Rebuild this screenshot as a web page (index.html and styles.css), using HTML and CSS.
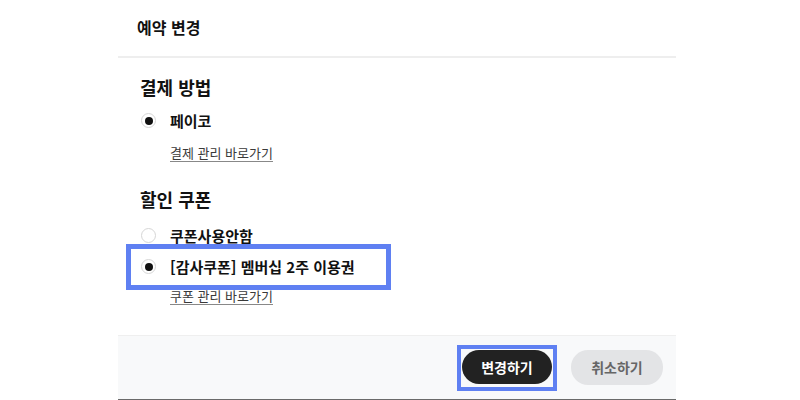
FILE: index.html
```html
<!DOCTYPE html>
<html lang="ko">
<head>
<meta charset="utf-8">
<link rel="stylesheet" href="styles.css">
</head>
<body>
<div class="modal">
  <div class="modal-header"><h1 class="title">예약 변경</h1></div>
  <div class="modal-body">
    <section class="section">
      <h2 class="section-title">결제 방법</h2>
      <div class="option"><span class="radio checked"></span><span class="label">페이코</span></div>
      <a class="manage-link">결제 관리 바로가기</a>
    </section>
    <section class="section coupons">
      <h2 class="section-title">할인 쿠폰</h2>
      <div class="option"><span class="radio"></span><span class="label">쿠폰사용안함</span></div>
      <div class="option highlighted"><span class="radio checked"></span><span class="label">[감사쿠폰] 멤버십 2주 이용권</span><span class="focus-ring"></span></div>
      <a class="manage-link tight">쿠폰 관리 바로가기</a>
    </section>
  </div>
  <div class="modal-footer">
    <button class="btn btn-primary">변경하기<span class="focus-ring btn-ring"></span></button>
    <button class="btn btn-cancel">취소하기</button>
  </div>
</div>
</body>
</html>
```
FILE: styles.css
```css
* { box-sizing: border-box; }
html, body { margin: 0; padding: 0; background: #fff; }
body {
  font-family: "Noto Sans CJK KR", "Noto Sans", sans-serif;
  color: #111;
}
.modal {
  width: 558px;
  margin-left: 118px;
  height: 400px;
  display: flex;
  flex-direction: column;
}
.modal-header {
  height: 58px;
  padding: 0 0 0 19px;
  border-bottom: 2px solid #eeeeee;
  display: flex;
  align-items: center;
}
.title {
  margin: 0;
  font-size: 16px;
  font-weight: 700;
  line-height: 24px;
  padding-bottom: 3px;
}
.modal-body {
  padding: 16px 22px 0 22px;
  flex: 1;
}
.section { display: flex; flex-direction: column; align-items: flex-start; }
.section-title {
  margin: 0;
  font-size: 18px;
  font-weight: 700;
  line-height: 26px;
}
.option {
  position: relative;
  display: flex;
  align-items: center;
  height: 31px;
  gap: 14px;
}
.section > .section-title + .option { margin-top: 5px; }
.radio {
  width: 15px;
  height: 15px;
  margin-left: 1px;
  border-radius: 50%;
  border: 1px solid #d6d6d6;
  background: #fff;
  display: flex;
  align-items: center;
  justify-content: center;
}
.radio.checked::after {
  content: "";
  width: 8px;
  height: 8px;
  border-radius: 50%;
  background: #111;
}
.label {
  font-size: 15px;
  font-weight: 700;
  line-height: 20px;
}
.manage-link {
  margin: 7px 0 0 30px;
  font-size: 13px;
  line-height: 20px;
  color: #3a3a3a;
  text-decoration: underline;
  text-decoration-color: #888;
  text-underline-offset: 3px;
}
.manage-link.tight { margin-top: 4px; }
.coupons { margin-top: 23px; }
.coupons .section-title + .option { margin-top: 8px; }
.focus-ring {
  position: absolute;
  left: -14px;
  right: -36px;
  top: -7px;
  bottom: -8px;
  border: 5px solid #5f80f2;
  pointer-events: none;
}
.modal-footer {
  height: 65px;
  border-top: 1px solid #efefef;
  border-bottom: 1px solid #6a6a6a;
  background: #f8f9fa;
  display: flex;
  align-items: center;
  justify-content: flex-end;
  gap: 19px;
  padding: 0 13px 1px 0;
}
.btn {
  position: relative;
  font-family: inherit;
  font-size: 14px;
  font-weight: 700;
  border: none;
  border-radius: 17px;
  height: 34px;
  width: 90px;
  padding: 0;
}
.btn-primary { background: #222222; color: #fff; }
.btn-cancel { background: #e3e4e6; color: #666; width: 92px; height: 35px; }
.btn-ring {
  left: -5px;
  right: -5px;
  top: -5px;
  bottom: -7px;
  border-width: 4px;
  border-radius: 0;
}
```
